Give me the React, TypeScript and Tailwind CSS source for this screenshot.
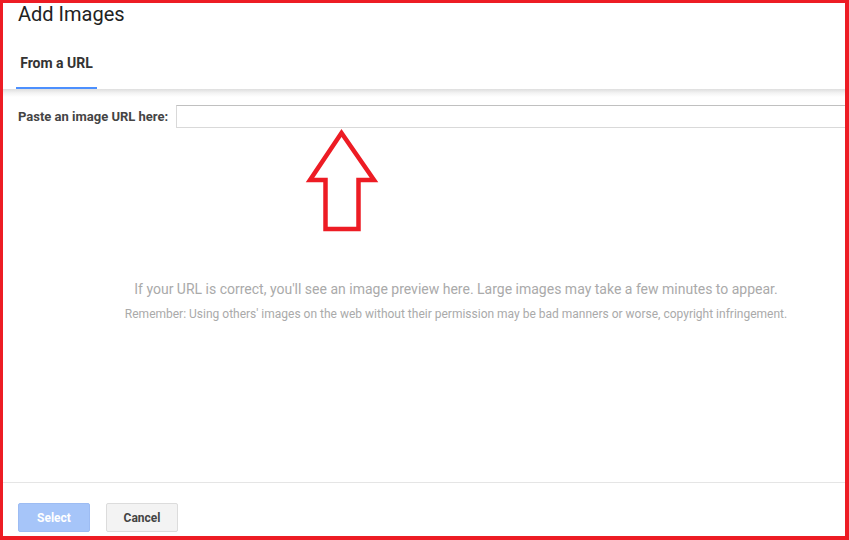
import React from "react";

export default function App() {
  return (
    <div className="relative w-[849px] h-[540px] overflow-hidden bg-white" style={{ fontFamily: "Roboto, 'Liberation Sans', Arial, sans-serif" }}>
      <div className="flex flex-col w-[912px] h-full">
        {/* Header */}
        <div className="flex flex-col h-[89px] shrink-0">
          <div className="pl-[18px] pt-[2px] text-[20px] leading-[24px] text-[#222] font-normal">Add Images</div>
          <div className="flex mt-auto pl-[16px]">
            <div className="w-[81px] h-[34px] flex items-start justify-center border-b-2 border-[#4d90fe]">
              <span className="text-[14px] leading-[16px] font-bold text-[#333]">From a URL</span>
            </div>
          </div>
        </div>
        <div className="h-[8px] shrink-0 bg-linear-to-b from-[#dedede] via-[#f3f3f3] to-white" />

        {/* Body */}
        <div className="flex-1 flex flex-col">
          <div className="flex items-center mt-[8px] pl-[18px]">
            <label className="text-[13px] leading-[16px] font-bold text-[#444] w-[158px] shrink-0">Paste an image URL here:</label>
            <div className="flex-1 h-[23px] border border-[#d9d9d9] border-t-[#c0c0c0] bg-white" />
          </div>
          <div className="flex flex-col items-center mt-[151px] gap-[7px]">
            <div className="text-[14px] leading-[20px] text-[#aaaaaa]">
              If your URL is correct, you'll see an image preview here. Large images may take a few minutes to appear.
            </div>
            <div className="text-[12px] leading-[16px] text-[#aaaaaa]">
              Remember: Using others' images on the web without their permission may be bad manners or worse, copyright infringement.
            </div>
          </div>
        </div>

        {/* Footer */}
        <div className="h-[58px] shrink-0 border-t border-[#e5e5e5] flex items-start gap-[16px] pl-[18px] pt-[20px]">
          <button className="w-[72px] h-[29px] rounded-[2px] bg-[#a6c5f9] border border-[#9dbcf3] text-white text-[12px] font-bold">Select</button>
          <button className="w-[72px] h-[29px] rounded-[2px] bg-[#f3f3f3] border border-[#dcdcdc] text-[#444] text-[12px] font-bold">Cancel</button>
        </div>
      </div>

      {/* Annotation arrow */}
      <svg className="absolute left-0 top-0 pointer-events-none" width="849" height="540" viewBox="0 0 849 540">
        <polygon
          points="341.5,133 310,180 325.5,180 325.5,229 358.5,229 358.5,180 374,180"
          fill="none"
          stroke="#ed1c24"
          strokeWidth="4.5"
          strokeLinejoin="miter"
        />
      </svg>

      {/* Red frame */}
      <div className="absolute inset-0 pointer-events-none border-[#ed1c24] border-t-[3px] border-l-[3px] border-r-[4px] border-b-[4px]" />
    </div>
  );
}
